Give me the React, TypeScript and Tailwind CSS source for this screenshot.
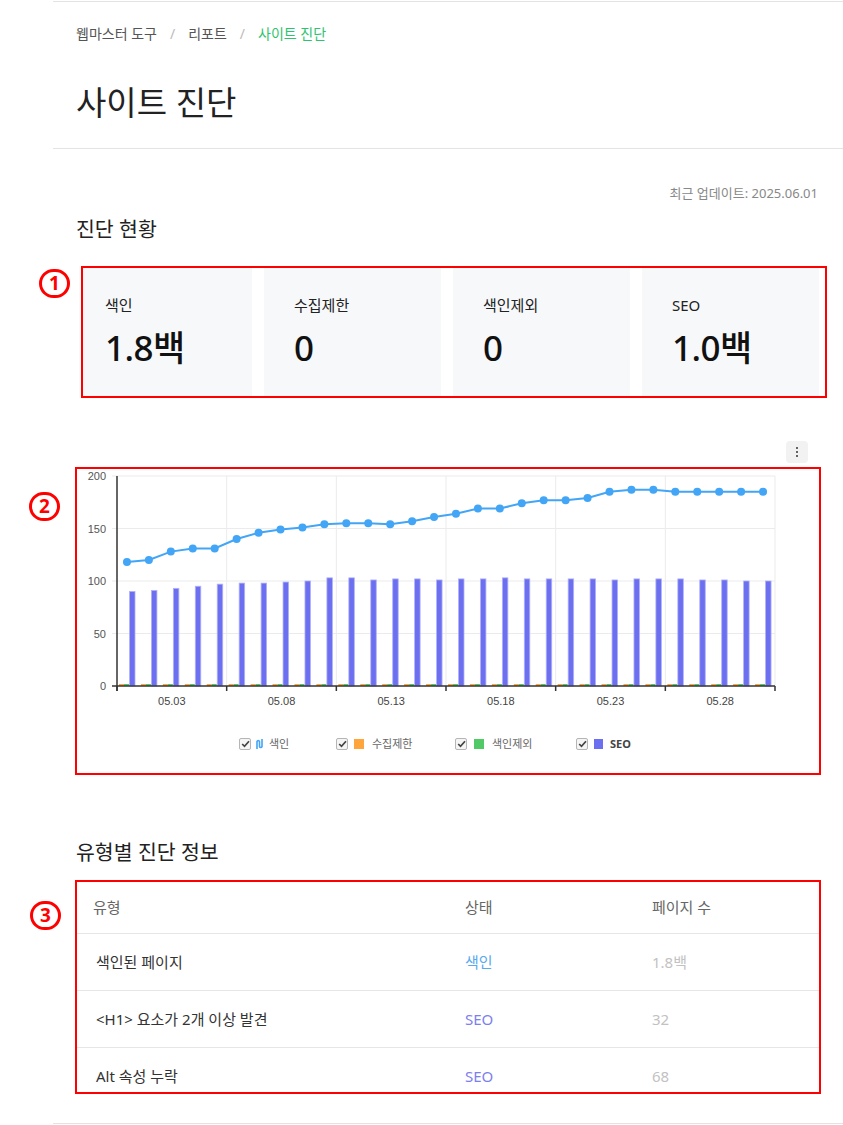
import React from "react";

const lineData = [118, 120, 128, 131, 131, 140, 146, 149, 151, 154, 155, 155, 154, 157, 161, 164, 169, 169, 174, 177, 177, 179, 185, 187, 187, 185, 185, 185, 185, 185];
const seoData = [90, 91, 93, 95, 97, 98, 98, 99, 100, 103, 103, 101, 102, 102, 101, 102, 102, 103, 102, 102, 102, 102, 101, 102, 102, 102, 101, 101, 100, 100];

const X0 = 117;
const X1 = 775;
const Y0 = 686;
const CW = (X1 - X0) / 30;
const yOf = (v: number) => Y0 - v * 1.05;

function Mark({ n }: { n: string }) {
  return (
    <span className="flex h-[29px] w-[31px] items-center justify-center rounded-full border-[3px] border-[#ff0000] text-[19px] font-bold leading-none text-[#ff0000]">
      {n}
    </span>
  );
}

function Chart() {
  const labels = ["05.03", "05.08", "05.13", "05.18", "05.23", "05.28"];
  return (
    <svg width={742} height={250} viewBox="77 469 742 250" className="block">
      {[50, 100, 150, 200].map((v) => (
        <line key={v} x1={112} x2={X1} y1={yOf(v)} y2={yOf(v)} stroke="#ebebeb" strokeWidth={1} />
      ))}
      {[1, 2, 3, 4, 5, 6].map((k) => (
        <line key={k} x1={X0 + k * 5 * CW} x2={X0 + k * 5 * CW} y1={yOf(200)} y2={Y0} stroke="#ebebeb" strokeWidth={1} />
      ))}
      {seoData.map((v, i) => {
        const cl = X0 + i * CW;
        return (
          <g key={i}>
            <rect x={cl + 2} y={Y0 - 2} width={5} height={2} fill="#ffa53b" />
            <rect x={cl + 7} y={Y0 - 2} width={5} height={2} fill="#52c967" />
            <rect x={cl + 12.5} y={yOf(v)} width={5.5} height={v * 1.05} fill="#6b6ff0" stroke="#b0b2f8" strokeWidth={0.8} />
          </g>
        );
      })}
      <line x1={X0} x2={X0} y1={yOf(200)} y2={Y0 + 5} stroke="#333" strokeWidth={1.5} />
      <line x1={X0 - 5} x2={X1} y1={Y0} y2={Y0} stroke="#333" strokeWidth={1.5} />
      {[0, 1, 2, 3, 4, 5, 6].map((k) => (
        <line key={k} x1={X0 + k * 5 * CW} x2={X0 + k * 5 * CW} y1={Y0} y2={Y0 + 5} stroke="#333" strokeWidth={1.5} />
      ))}
      <polyline
        points={lineData.map((v, i) => `${X0 + (i + 0.5) * CW - 1},${yOf(v)}`).join(" ")}
        fill="none"
        stroke="#42a5f5"
        strokeWidth={2}
      />
      {lineData.map((v, i) => (
        <circle key={i} cx={X0 + (i + 0.5) * CW - 1} cy={yOf(v)} r={4} fill="#42a5f5" />
      ))}
      {[0, 50, 100, 150, 200].map((v) => (
        <text key={v} x={106} y={yOf(v) + 4} textAnchor="end" fontSize={11} fill="#555" fontFamily="'Liberation Sans', Arial, sans-serif">
          {v}
        </text>
      ))}
      {labels.map((l, k) => (
        <text key={l} x={X0 + (k * 5 + 2.5) * CW} y={705} textAnchor="middle" fontSize={11} fill="#444" fontFamily="'Liberation Sans', Arial, sans-serif">
          {l}
        </text>
      ))}
    </svg>
  );
}

function Check() {
  return (
    <span className="flex h-[12px] w-[12px] items-center justify-center rounded-[2px] border border-[#b5b5b5] bg-[#f5f5f5]">
      <svg width="9" height="8" viewBox="0 0 9 8">
        <path d="M1.2 4 L3.5 6.3 L8 1.3" fill="none" stroke="#444" strokeWidth="1.7" />
      </svg>
    </span>
  );
}

function Legend() {
  return (
    <div className="mt-[18px] flex h-[14px] items-center pl-[162px] text-[11px] text-[#666]">
      <div className="flex w-[97px] items-center">
        <Check />
        <svg width="7" height="12" viewBox="0 0 7 12" className="ml-[5px]">
          <path d="M1 11 V3.5 a1.3 1.3 0 0 1 2.5 0 V8.5 a1.3 1.3 0 0 0 2.5 0 V1" fill="none" stroke="#42a5f5" strokeWidth="1.6" />
        </svg>
        <span className="ml-[6px]">색인</span>
      </div>
      <div className="flex w-[119px] items-center">
        <Check />
        <span className="ml-[6px] h-[10px] w-[10px] bg-[#ffa53b]" />
        <span className="ml-[8px]">수집제한</span>
      </div>
      <div className="flex w-[121px] items-center">
        <Check />
        <span className="ml-[7px] h-[10px] w-[10px] bg-[#52c967]" />
        <span className="ml-[8px]">색인제외</span>
      </div>
      <div className="flex items-center">
        <Check />
        <span className="ml-[6px] h-[10px] w-[9px] bg-[#6b6ff0]" />
        <span className="ml-[7px] text-[11px] font-bold text-[#444]">SEO</span>
      </div>
    </div>
  );
}

const stats = [
  { label: "색인", value: "1.8백", w: "w-[169px] pl-[22px]" },
  { label: "수집제한", value: "0", w: "w-[177px] pl-[30px]" },
  { label: "색인제외", value: "0", w: "w-[177px] pl-[30px]" },
  { label: "SEO", value: "1.0백", w: "w-[177px] pl-[30px]" },
];

const rows = [
  { type: "색인된 페이지", status: "색인", color: "text-[#5aa9f0]", count: "1.8백" },
  { type: "<H1> 요소가 2개 이상 발견", status: "SEO", color: "text-[#7c7ff0]", count: "32" },
  { type: "Alt 속성 누락", status: "SEO", color: "text-[#7c7ff0]", count: "68" },
];

export default function App() {
  return (
    <div className="min-h-[1125px] w-full bg-white font-[family-name:'Noto_Sans','Noto_Sans_CJK_KR',sans-serif] text-[#222]">
      <div className="ml-[53px]">
        <div className="mt-px h-px bg-[#e3e3e3]" />
        <div className="pl-[23px]">
          <div className="mt-[23px] flex h-[18px] items-center text-[14px] leading-[18px]">
            <span className="text-[#555]">웹마스터 도구</span>
            <span className="mx-[13px] text-[#bbb]">/</span>
            <span className="text-[#555]">리포트</span>
            <span className="mx-[13px] text-[#bbb]">/</span>
            <span className="text-[#2ec36e]">사이트 진단</span>
          </div>
          <h1 className="mt-[41px] text-[33px] leading-[38px] text-[#222]">사이트 진단</h1>
        </div>
        <div className="mt-[26px] h-px bg-[#e3e3e3]" />

        <div className="w-[765px] pl-[23px]">
          <p className="mt-[35px] text-right text-[13px] leading-[18px] text-[#888]">최근 업데이트: 2025.06.01</p>
          <h2 className="mt-[14px] text-[20.5px] leading-[26px] text-[#222]">진단 현황</h2>

          <div className="relative ml-[5px] mt-[24px] h-[132px] w-[746px] border-2 border-[#ff0000]">
            <div className="absolute left-[-44px] top-[1px]">
              <Mark n="1" />
            </div>
            <div className="flex h-full gap-3">
              {stats.map((s) => (
                <div key={s.label} className={`${s.w} h-full bg-[#f7f8fa] pt-[27px]`}>
                  <div className="text-[15px] leading-[20px] text-[#222]">{s.label}</div>
                  <div className="mt-[13px] text-[35px] font-medium leading-[40px] tracking-[-0.5px] text-[#111]">{s.value}</div>
                </div>
              ))}
            </div>
          </div>

          <div className="mt-[43px] flex justify-end pr-[10px]">
            <button className="flex h-[22px] w-[22px] flex-col items-center justify-center gap-[2px] rounded-[4px] bg-[#f2f2f2]">
              <span className="h-[2px] w-[2px] rounded-full bg-[#333]" />
              <span className="h-[2px] w-[2px] rounded-full bg-[#333]" />
              <span className="h-[2px] w-[2px] rounded-full bg-[#333]" />
            </button>
          </div>

          <div className="relative ml-[-1px] mt-[4px] h-[308px] w-[746px] border-2 border-[#ff0000]">
            <div className="absolute left-[-48px] top-[23px]">
              <Mark n="2" />
            </div>
            <Chart />
            <Legend />
          </div>

          <h2 className="mt-[64px] text-[20.5px] leading-[26px] text-[#222]">유형별 진단 정보</h2>

          <div className="relative ml-[-1px] mt-[15px] h-[214px] w-[746px] border-2 border-[#ff0000]">
            <div className="absolute left-[-47px] top-[19px]">
              <Mark n="3" />
            </div>
            <div className="h-full overflow-hidden text-[15px]">
              <div className="grid h-[52px] grid-cols-[388px_187px_1fr] items-center border-b border-[#e6e6e6] text-[#666]">
                <span className="pl-[16px]">유형</span>
                <span>상태</span>
                <span>페이지 수</span>
              </div>
              {rows.map((r) => (
                <div key={r.type} className="grid h-[57px] shrink-0 grid-cols-[388px_187px_1fr] items-center border-b border-[#e6e6e6]">
                  <span className="pl-[19px] text-[#333]">{r.type}</span>
                  <span className={r.color}>{r.status}</span>
                  <span className="text-[#c2c2c2]">{r.count}</span>
                </div>
              ))}
            </div>
          </div>
        </div>

        <div className="mt-[29px] h-px bg-[#e3e3e3]" />
      </div>
    </div>
  );
}
